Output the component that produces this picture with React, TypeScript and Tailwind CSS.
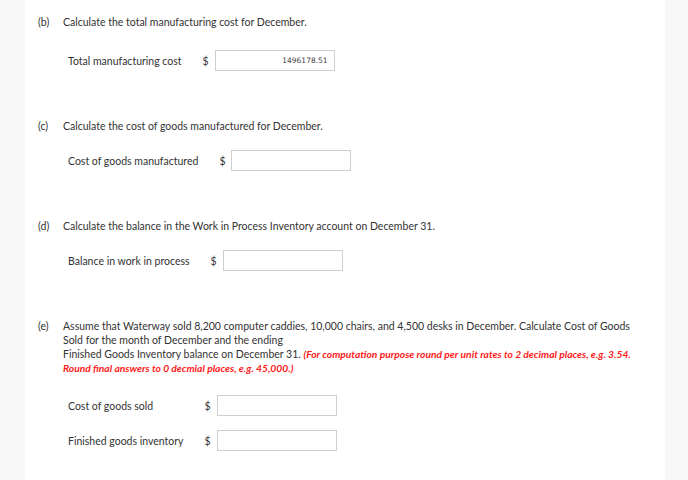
import React from 'react';

const Dollar: React.FC = () => <span className="text-[10.5px] leading-[14px] text-[#333]">$</span>;

const AmountInput: React.FC<{ value?: string }> = ({ value }) => (
  <div className="ml-[6px] flex h-[21px] w-[120px] items-center justify-end border border-[#cfcfcf] bg-white pr-[6px]">
    <span className="font-['DejaVu_Sans',sans-serif] text-[7.5px] text-[#444]">{value}</span>
  </div>
);

const AmountRow: React.FC<{ label: string; value?: string; className?: string }> = ({ label, value, className }) => (
  <div className={`flex items-center pl-[30px] ${className ?? ''}`}>
    <span className="mr-[21px] text-[10.5px] leading-[14px] text-[#333]">{label}</span>
    <Dollar />
    <AmountInput value={value} />
  </div>
);

const Question: React.FC<{ tag: string; children: React.ReactNode; className?: string }> = ({ tag, children, className }) => (
  <div className={`flex text-[10.5px] leading-[14px] text-[#333] ${className ?? ''}`}>
    <span className="w-[25px] shrink-0">{tag}</span>
    <div className="w-[580px]">{children}</div>
  </div>
);

export default function App() {
  return (
    <div className="min-h-[480px] bg-[#f8f8f8] font-['Lato',sans-serif]">
      <div className="ml-[25px] min-h-[480px] w-[640px] bg-white pl-[13px] pt-[15px]">
        <Question tag="(b)">Calculate the total manufacturing cost for December.</Question>
        <AmountRow className="mt-[21px]" label="Total manufacturing cost" value="1496178.51" />

        <Question tag="(c)" className="mt-[48px]">Calculate the cost of goods manufactured for December.</Question>
        <AmountRow className="mt-[17px]" label="Cost of goods manufactured" />

        <Question tag="(d)" className="mt-[48px]">Calculate the balance in the Work in Process Inventory account on December 31.</Question>
        <AmountRow className="mt-[17px]" label="Balance in work in process" />

        <Question tag="(e)" className="mt-[48px]">
          Assume that Waterway sold 8,200 computer caddies, 10,000 chairs, and 4,500 desks in December. Calculate Cost of Goods
          <br />
          Sold for the month of December and the ending
          <br />
          Finished Goods Inventory balance on December 31.{' '}
          <span className="text-[10.25px] font-bold italic text-[#ff1a1a]">
            (For computation purpose round per unit rates to 2 decimal places, e.g. 3.54. Round final answers to 0 decmial places, e.g. 45,000.)
          </span>
        </Question>
        <div className="mt-[20px] grid w-max grid-cols-[auto_auto_auto] items-center gap-y-[14px] pl-[30px]">
          <span className="mr-[21px] text-[10.5px] leading-[14px] text-[#333]">Cost of goods sold</span>
          <Dollar />
          <AmountInput />
          <span className="mr-[21px] text-[10.5px] leading-[14px] text-[#333]">Finished goods inventory</span>
          <Dollar />
          <AmountInput />
        </div>
      </div>
    </div>
  );
}
